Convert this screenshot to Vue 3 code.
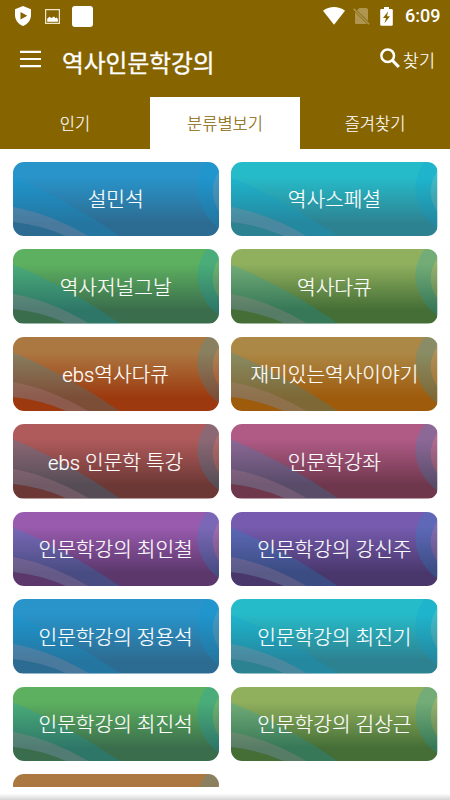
<script setup>
const palette = {
  blue: ['#2894ca', '#2d6c92'],
  cyan: ['#26bbc9', '#2d8291'],
  green: ['#5db060', '#3a6d4c'],
  olive: ['#90b05e', '#446e36'],
  rust: ['#ac7842', '#9c390e'],
  amber: ['#ac8846', '#9e5b0c'],
  red: ['#b05b5b', '#6c3835'],
  pink: ['#b05b86', '#6e374c'],
  purple: ['#995bae', '#5b376c'],
  violet: ['#765bae', '#49376c'],
}
const cards = [
  ['설민석', 'blue'], ['역사스페셜', 'cyan'],
  ['역사저널그날', 'green'], ['역사다큐', 'olive'],
  ['ebs역사다큐', 'rust'], ['재미있는역사이야기', 'amber'],
  ['ebs 인문학 특강', 'red'], ['인문학강좌', 'pink'],
  ['인문학강의 최인철', 'purple'], ['인문학강의 강신주', 'violet'],
  ['인문학강의 정용석', 'blue'], ['인문학강의 최진기', 'cyan'],
  ['인문학강의 최진석', 'green'], ['인문학강의 김상근', 'olive'],
  ['', 'rust'],
].map(([label, tone]) => ({ label, colors: palette[tone] }))
</script>

<template>
  <div class="screen">
    <header class="top">
      <div class="status">
        <svg class="shield" width="18" height="20" viewBox="0 0 18 20"><path fill="#fff" d="M9 0 17 3.2V9c0 5-3.300 9-8 11C4.300 18 1 14 1 9V3.200Z"/><path fill="#866500" d="M6.500 6v7.600L13.300 9.800Z"/></svg>
        <svg class="picture" width="15" height="15" viewBox="0 0 15 15"><path fill="none" stroke="#eee5cb" stroke-width="1.200" d="M.6.600h13.800v13.800H.6Z"/><path fill="#fff" d="M2.200 12.800V9.700l2.200-1.900 2 1.200L9 7.500l1.500 1.700 1.200-.8 1.200 1.500v2.900Z"/></svg>
        <span class="blank"></span>
        <span class="grow"></span>
        <svg class="wifi" width="22" height="18" viewBox="0 0 22 18"><path fill="#fff" d="M0 3.700C6.500-1.200 15.500-1.200 22 3.700L11 17.800Z"/></svg>
        <svg class="sim" width="17" height="18" viewBox="0 0 17 18"><path fill="#ae9651" d="M6.500 1H13q2 0 2 2v11L4 3.300ZM2 5l12 12H3q-1 0-1-1Z"/><path stroke="#ae9651" stroke-width="1.500" d="m.6 1.800 15.500 15.500"/></svg>
        <svg class="battery" width="13" height="19" viewBox="0 0 13 19"><path fill="#fff" d="M4 0h5v2h2.500q1.300 0 1.300 1.300v14.200q0 1.300-1.300 1.300h-10Q.2 18.800.2 17.500V3.300Q.2 2 1.500 2H4Z"/><path fill="#866500" d="M8 4.500 3 11h3l-1.500 5.200L10 9.300H7Z"/></svg>
        <span class="clock">6:09</span>
      </div>
      <div class="bar">
        <svg width="21" height="18" viewBox="0 0 21 18"><path stroke="#fff" stroke-width="2.200" d="M0 1.800h21M0 9h21M0 16.200h21"/></svg>
        <h1>역사인문학강의</h1>
        <div class="search">
          <svg width="20" height="21" viewBox="0 0 20 21"><circle cx="7.700" cy="7.700" r="6.300" fill="none" stroke="#fff" stroke-width="2.500"/><path stroke="#fff" stroke-width="3.200" d="m12 12 6.800 7"/></svg>
          <span>찾기</span>
        </div>
      </div>
      <nav class="tabs">
        <span>인기</span><span class="active">분류별보기</span><span>즐겨찾기</span>
      </nav>
    </header>
    <main class="list">
      <div v-for="(card, i) in cards" :key="i" class="card">
        <svg class="art" viewBox="0 0 206 75" preserveAspectRatio="none">
          <defs>
            <linearGradient :id="'base' + i" x1="0" y1="0" x2="0" y2="1">
              <stop offset=".2" :stop-color="card.colors[0]"/>
              <stop offset=".82" :stop-color="card.colors[1]"/>
            </linearGradient>
          </defs>
          <rect width="206" height="75" :fill="`url(#base${i})`"/>
          <path fill="#00a0dc" fill-opacity=".2" d="M0 15.500C36 30 78 54 107 75H54Q29 63.500 0 60.500Z"/>
          <path fill="#c88c96" fill-opacity=".23" d="M0 45Q40 53 76 75H54Q29 63.500 0 60.500Z"/>
          <path fill="#00a0dc" fill-opacity=".2" d="M193.500 0C178 19 182 49 206 67V50Q193 30 206 9V0Z"/>
          <path fill="#b4bebe" fill-opacity=".17" d="M206 9Q193 30 206 50Z"/>
        </svg>
        <span class="label">{{ card.label }}</span>
      </div>
    </main>
    <footer class="bottom"></footer>
  </div>
</template>

<style>
body { margin: 0; background: #fff; }
</style>

<style scoped>
.screen { width: 450px; height: 800px; display: flex; flex-direction: column; overflow: hidden; background: #fff; color: #fff; font-family: Roboto, "Noto Sans CJK KR", sans-serif; }
.top { height: 149px; flex: none; background: #866500; }
.status { height: 32px; display: flex; align-items: center; padding: 0 10px 0 14px; box-sizing: border-box; }
.shield { margin-right: 13px; }
.picture { margin-right: 12px; }
.blank { width: 21px; height: 21px; border-radius: 3px; background: #fff; }
.grow { flex: 1; }
.wifi { margin-right: 8px; }
.sim { margin-right: 10px; }
.battery { margin-right: 12px; }
.clock { font-size: 18px; font-weight: 500; line-height: 32px; width: 35px; }
.bar { height: 65px; display: flex; align-items: center; padding: 0 15px 11px 20px; box-sizing: border-box; }
h1 { margin: 9px 0 0 21px; font-size: 23.700px; line-height: 36px; font-weight: 400; -webkit-text-stroke: .35px currentColor; white-space: nowrap; }
.search { margin-left: auto; display: flex; align-items: center; gap: 3px; font-size: 17.500px; font-weight: 300; -webkit-text-stroke: .15px currentColor; }
.search svg { margin-bottom: 2px; }
.tabs { height: 52px; display: grid; grid-template-columns: repeat(3, 1fr); text-align: center; font-size: 16.500px; font-weight: 300; line-height: 56px; -webkit-text-stroke: .15px currentColor; }
.tabs span { height: 52px; }
.active { background: #fff; color: #866500; }
.list { height: 638px; flex: none; box-sizing: border-box; padding: 12.500px 12.500px 0; overflow: hidden; display: grid; grid-template-columns: 1fr 1fr; grid-auto-rows: 74.500px; gap: 13px 12.500px; align-content: start; }
.card { position: relative; border-radius: 11px; overflow: hidden; display: flex; align-items: center; justify-content: center; }
.art { position: absolute; inset: 0; width: 100%; height: 100%; }
.label { position: relative; padding-top: 3px; font-size: 20.300px; line-height: 30px; font-weight: 300; -webkit-text-stroke: .2px currentColor; white-space: pre; }
.bottom { flex: 1; background: linear-gradient(#fff 50%, #d6d6d6); }
</style>
